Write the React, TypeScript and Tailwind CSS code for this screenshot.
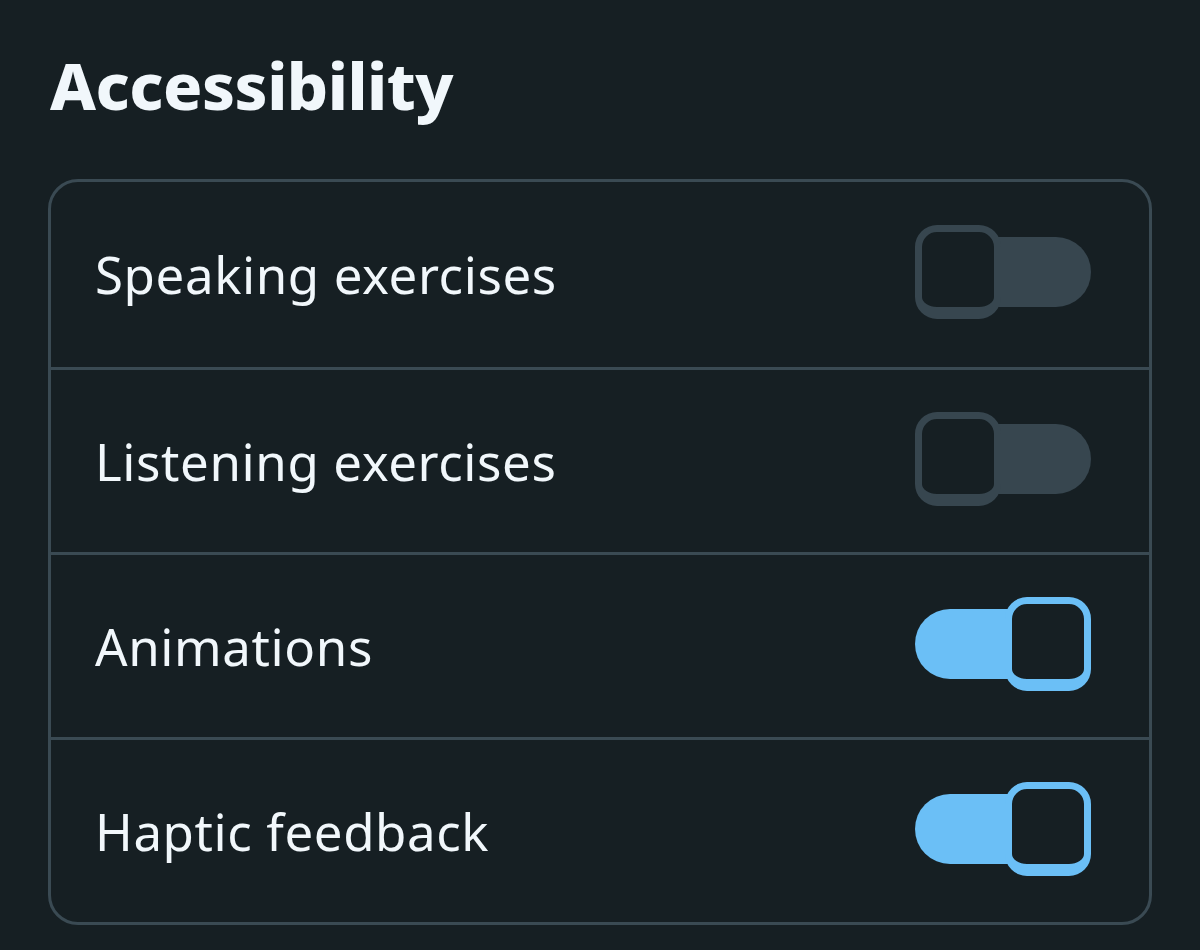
import React, { useState } from "react"

const rowsInit = [
  { label: "Speaking exercises", on: false },
  { label: "Listening exercises", on: false },
  { label: "Animations", on: true },
  { label: "Haptic feedback", on: true },
]

function Toggle({ on, onClick }: { on: boolean; onClick: () => void }) {
  return (
    <button
      onClick={onClick}
      className={`relative flex items-center w-[176px] h-[94px] mb-[5px] ${on ? "justify-end" : "justify-start"}`}
    >
      <span
        className={`absolute left-0 right-0 top-[12px] h-[70px] rounded-full ${on ? "bg-[#6bbff6]" : "bg-[#37464f]"}`}
      />
      <span
        className={`relative w-[86px] h-[94px] rounded-[22px] border-[7px] border-b-[12px] bg-[#161f23] ${
          on ? "border-[#6bbff6]" : "border-[#37464f]"
        }`}
      />
    </button>
  )
}

export default function App() {
  const [rows, setRows] = useState(rowsInit)

  const flip = (i: number) => {
    setRows(rows.map((r, j) => (j === i ? { ...r, on: !r.on } : r)))
  }

  return (
    <div
      className="w-[1200px] h-[950px] bg-[#161f23] text-[#f1f7fb] px-[48px] pt-[53px]"
      style={{ fontFamily: "'Noto Sans', 'DejaVu Sans', sans-serif" }}
    >
      <h1 className="text-[65px] font-extrabold leading-none tracking-[-0.5px] mb-[61px] ml-[2px]">Accessibility</h1>
      <div className="border-[3px] border-[#3a4a53] rounded-[30px]">
        {rows.map((r, i) => (
          <div
            key={r.label}
            className={`flex items-center justify-between h-[185px] pl-[44px] pr-[58px] ${
              i > 0 ? "border-t-[3px] border-[#3a4a53]" : ""
            }`}
          >
            <span className="text-[51px] leading-none tracking-[0.6px]">{r.label}</span>
            <Toggle on={r.on} onClick={() => flip(i)} />
          </div>
        ))}
      </div>
    </div>
  )
}
